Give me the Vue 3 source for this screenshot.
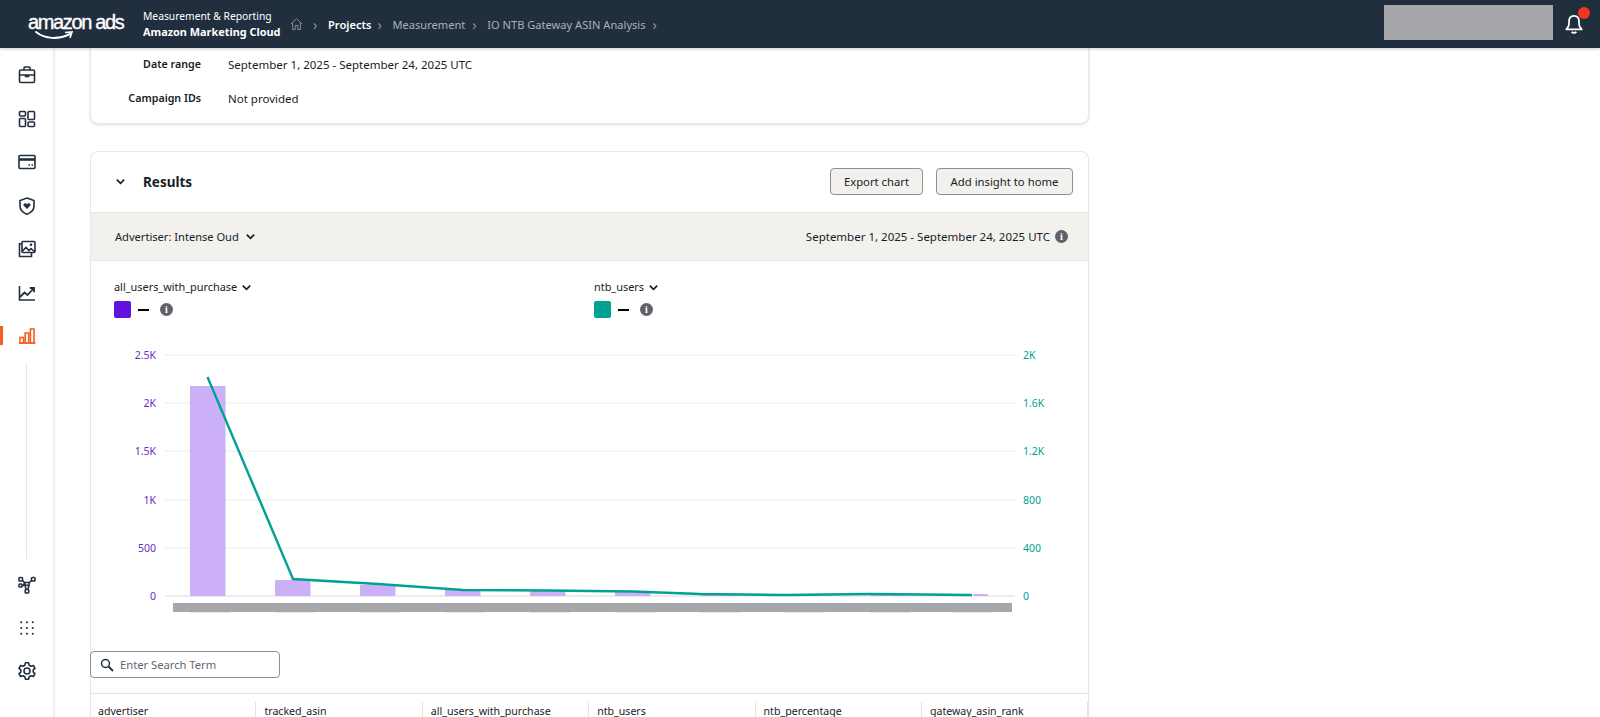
<script setup>
const crumbs = ['Measurement', 'IO NTB Gateway ASIN Analysis']
const columns = ['advertiser', 'tracked_asin', 'all_users_with_purchase', 'ntb_users', 'ntb_percentage', 'gateway_asin_rank']
const leftTicks = [['2.5K', 355], ['2K', 403], ['1.5K', 451], ['1K', 500], ['500', 548], ['0', 596]]
const rightTicks = [['2K', 355], ['1.6K', 403], ['1.2K', 451], ['800', 500], ['400', 548], ['0', 596]]
const bars = [
  [190, 386], [275, 580], [360, 585], [445, 589], [530, 590],
  [615, 591], [700, 594], [785, 595], [870, 595], [973, 594]
]
const line = '207.5,377 293,579 378,584 463,590 548,590.5 633,591.5 700,594 785,595 870,594 972,595'
const stubs = [178, 263, 348, 433, 518, 603, 688, 773, 858, 941]
</script>

<template>
  <div class="page">
    <header class="topbar">
      <div class="logo">
        <span class="logo-text">amazon ads</span>
        <svg class="smile" width="44" height="12" viewBox="0 0 44 12">
          <path d="M2 2 C11 9 24 10 36 4" fill="none" stroke="#fff" stroke-width="2" stroke-linecap="round" />
          <path d="M31 2.5 L38 2 L36 8" fill="none" stroke="#fff" stroke-width="1.6" />
        </svg>
      </div>
      <div class="product">
        <div>Measurement &amp; Reporting</div>
        <div class="product-name">Amazon Marketing Cloud</div>
      </div>
      <nav class="crumbs">
        <svg class="home" width="13" height="14" viewBox="0 0 14 14" fill="none" stroke="#8b95a1" stroke-width="1">
          <path d="M1 7 L7 1.2 L13 7 M2.8 5.6 V13 H5.6 V8.6 H8.4 V13 H11.2 V5.6" />
        </svg>
        <span class="chev">›</span>
        <span class="crumb-active">Projects</span>
        <template v-for="c in crumbs" :key="c">
          <span class="chev">›</span>
          <span class="crumb">{{ c }}</span>
        </template>
        <span class="chev">›</span>
      </nav>
      <div class="spacer"></div>
      <div class="redacted-user"></div>
      <div class="bell">
        <svg width="20" height="22" viewBox="0 0 22 24" fill="none" stroke="#fff" stroke-width="1.9">
          <path d="M11 3 C7 3 5.5 6 5.5 9.5 V12 C5.5 15 4 16.5 2.5 18 H19.5 C18 16.5 16.5 15 16.5 12 V9.5 C16.5 6 15 3 11 3 Z" stroke-linejoin="round" />
          <path d="M8.5 20.5 C9.5 22.3 12.5 22.3 13.5 20.5" stroke-width="2" />
        </svg>
        <span class="dot"></span>
      </div>
    </header>

    <div class="body-row">
      <aside class="sidebar">
        <div class="side-top">
          <svg class="ico" viewBox="0 0 20 20"><rect x="2.5" y="5" width="15" height="12.5" rx="1.5" /><path d="M7 5 V3 C7 2.5 7.4 2 8 2 H12 C12.6 2 13 2.5 13 3 V5 M2.5 10 H17.5 M8.5 10 V11.5 H11.5 V10" /></svg>
          <svg class="ico" viewBox="0 0 20 20"><rect x="2.5" y="2.5" width="6" height="4.5" rx="1" /><rect x="2.5" y="9.5" width="6" height="8" rx="1" /><rect x="11" y="2.5" width="6.5" height="8" rx="1" /><rect x="11" y="13" width="6.5" height="4.5" rx="1" /></svg>
          <svg class="ico" viewBox="0 0 20 20"><rect x="2" y="3.5" width="16" height="13" rx="1" /><path d="M2 7.5 H18" stroke-width="2.6" /><path d="M11.5 13 H13 M14.5 13 H16" /></svg>
          <svg class="ico" viewBox="0 0 20 20"><path d="M10 2 L17 4.5 V10 C17 14 14 16.8 10 18.3 C6 16.8 3 14 3 10 V4.5 Z" /><path class="solid" d="M10 13 L6.8 9.8 C5.6 8.4 7.6 6.4 9.2 7.6 L10 8.3 L10.8 7.6 C12.4 6.4 14.4 8.4 13.2 9.8 Z" /></svg>
          <svg class="ico" viewBox="0 0 20 20"><rect x="5" y="2.5" width="13" height="11" rx="1" /><path d="M5 4.8 H2.5 V17.5 H14.5 V13.5" /><path d="M5 12.5 L9 8.5 L12 11.5 L14 9.5 L18 13" /><circle class="solid" cx="14" cy="5.8" r="1.3" /></svg>
          <svg class="ico" viewBox="0 0 20 20"><path d="M2.5 3 V17 H18" /><path d="M3 14 L7.5 9.5 L10.5 12 L16.5 5.5 M12.8 5 H17 V9.2" stroke-width="1.8" /></svg>
          <div class="active-item">
            <span class="active-bar"></span>
            <svg class="ico orange" viewBox="0 0 20 20"><path d="M2 17 H18.5" /><rect x="3" y="11.5" width="3.6" height="5.5" /><rect x="8.2" y="7" width="3.6" height="10" /><rect x="13.4" y="3" width="3.6" height="14" /></svg>
          </div>
        </div>
        <div class="side-line"></div>
        <div class="side-bottom">
          <svg class="ico" viewBox="0 0 20 20"><rect x="2" y="2.5" width="3.5" height="3.5" rx=".8" /><rect x="14.5" y="2.5" width="3.5" height="3.5" rx=".8" /><rect x="8.2" y="14.5" width="3.5" height="3.5" rx=".8" /><rect x="2" y="9" width="3" height="3" rx=".8" /><path d="M5.5 5.5 L7.5 7.5 H12.5 L14.5 5.5 M7.5 7.5 L6.5 10.5 H5 M12.5 7.5 L11 14.5 M7.5 7.5 L9 14.5 M6.5 10.5 L13 10" /></svg>
          <svg class="ico dots" viewBox="0 0 20 20"><circle v-for="n in 9" :key="n" :cx="4.2 + ((n - 1) % 3) * 5.8" :cy="4.2 + Math.floor((n - 1) / 3) * 5.8" r="1.05" /></svg>
          <svg class="ico" viewBox="0 0 20 20"><circle cx="10" cy="10" r="3" /><path d="M8.4 1.8 H11.6 L12.1 4.2 L14.1 5.3 L16.4 4.5 L18 7.3 L16.2 8.9 V11.1 L18 12.7 L16.4 15.5 L14.1 14.7 L12.1 15.8 L11.6 18.2 H8.4 L7.9 15.8 L5.9 14.7 L3.6 15.5 L2 12.7 L3.8 11.1 V8.9 L2 7.3 L3.6 4.5 L5.9 5.3 L7.9 4.2 Z" stroke-linejoin="round" /></svg>
        </div>
      </aside>

      <main class="main">
        <section class="card summary">
          <div class="summary-row"><span class="s-label">Date range</span><span>September 1, 2025 - September 24, 2025 UTC</span></div>
          <div class="summary-row"><span class="s-label">Campaign IDs</span><span>Not provided</span></div>
        </section>

        <section class="card results">
          <div class="results-head">
            <svg class="caret big" viewBox="0 0 12 12"><path d="M2 4 L6 8 L10 4" /></svg>
            <h2>Results</h2>
            <div class="spacer"></div>
            <button class="btn export">Export chart</button>
            <button class="btn insight">Add insight to home</button>
          </div>
          <div class="filter-bar">
            <span class="adv">Advertiser: Intense Oud</span>
            <svg class="caret big" viewBox="0 0 12 12"><path d="M2 4 L6 8 L10 4" /></svg>
            <div class="spacer"></div>
            <span>September 1, 2025 - September 24, 2025 UTC</span>
            <span class="info">i</span>
          </div>
          <div class="metrics">
            <div class="metric">
              <div class="metric-name">all_users_with_purchase <svg class="caret" viewBox="0 0 12 12"><path d="M2 4 L6 8 L10 4" /></svg></div>
              <div class="metric-val"><span class="swatch purple"></span><span class="dash"></span><span class="info">i</span></div>
            </div>
            <div class="metric">
              <div class="metric-name">ntb_users <svg class="caret" viewBox="0 0 12 12"><path d="M2 4 L6 8 L10 4" /></svg></div>
              <div class="metric-val"><span class="swatch teal"></span><span class="dash"></span><span class="info">i</span></div>
            </div>
          </div>
          <svg class="chart" width="999" height="310" viewBox="90 330 999 310">
            <line v-for="t in leftTicks" :key="t[1]" x1="165" x2="1015" :y1="t[1]" :y2="t[1]" :stroke="t[1] === 596 ? '#e6e6e3' : '#f2f2f0'" stroke-width="1.5" />
            <text v-for="t in leftTicks" :key="t[0]" x="156" :y="t[1] + 4" text-anchor="end" class="tick-left">{{ t[0] }}</text>
            <text v-for="t in rightTicks" :key="t[0]" x="1023" :y="t[1] + 4" class="tick-right">{{ t[0] }}</text>
            <rect v-for="(b, i) in bars" :key="b[0]" :x="b[0]" :y="b[1]" :width="i === 9 ? 15 : 35.5" :height="596 - b[1]" rx="1" fill="#cbb0f8" />
            <polyline :points="line" fill="none" stroke="#00a294" stroke-width="2.4" />
            <rect v-for="s in stubs" :key="s" :x="s + 12" y="612" width="40" height="1" fill="#e6e6e7" />
            <rect x="173" y="603" width="839" height="9" fill="#a6a7aa" />
          </svg>
          <div class="search">
            <svg width="14" height="14" viewBox="0 0 14 14" fill="none" stroke="#232f3e" stroke-width="1.5"><circle cx="5.5" cy="5.5" r="4" /><path d="M8.5 8.5 L13 13" stroke-width="1.8" /></svg>
            <span>Enter Search Term</span>
          </div>
          <div class="table-head">
            <div v-for="c in columns" :key="c" class="col">{{ c }}</div>
          </div>
        </section>
      </main>
    </div>
  </div>
</template>

<style scoped>
.page {
  width: 1600px;
  height: 717px;
  overflow: hidden;
  background: #fff;
  color: #161d26;
  font-family: "Noto Sans", "Open Sans", sans-serif;
  font-size: 11.5px;
}
.spacer { flex: 1; }

.topbar {
  height: 48px;
  display: flex;
  align-items: center;
  background: #212e3e;
  color: #fff;
  position: relative;
  z-index: 2;
  box-shadow: 0 1px 3px rgba(0, 0, 0, .2);
}
.logo {
  width: 98px;
  margin-left: 28px;
  position: relative;
  height: 48px;
}
.logo-text {
  position: absolute;
  left: 0;
  top: 9px;
  font-family: "Liberation Sans", sans-serif;
  font-size: 20px;
  letter-spacing: -1.35px;
  -webkit-text-stroke: .35px #fff;
  line-height: 26px;
  white-space: nowrap;
}
.smile { position: absolute; left: 6px; top: 30px; }
.product {
  margin-left: 17px;
  font-size: 10.3px;
  line-height: 16px;
  white-space: nowrap;
  width: 147px;
}
.product-name { font-weight: 700; font-size: 10.9px; }
.crumbs {
  display: flex;
  align-items: center;
  font-size: 11.1px;
  color: #a9b1bb;
}
.home { margin-right: 10px; }
.chev { font-size: 14px; width: 10px; color: #8b95a1; margin-right: 5px; }
.crumb-active { color: #fff; font-weight: 600; margin-right: 6px; }
.crumb { margin-right: 7px; }
.redacted-user {
  width: 169px;
  height: 35px;
  background: #a6a7aa;
  margin-top: -4px;
}
.bell {
  width: 47px;
  height: 48px;
  padding-right: 6px;
  box-sizing: border-box;
  display: flex;
  align-items: center;
  justify-content: center;
  position: relative;
}
.dot {
  position: absolute;
  left: 25px;
  top: 7px;
  width: 12px;
  height: 12px;
  border-radius: 50%;
  background: #f0371f;
}

.body-row { display: flex; height: 669px; }

.sidebar {
  width: 53px;
  flex: none;
  border-right: 1px solid #ececec;
  box-shadow: 2px 0 3px rgba(0, 0, 0, .04);
  display: flex;
  flex-direction: column;
  align-items: center;
  padding-top: 17px;
}
.side-top { display: flex; flex-direction: column; gap: 23.5px; align-items: center; }
.ico {
  width: 20px;
  height: 20px;
  display: block;
  fill: none;
  stroke: #232f3e;
  stroke-width: 1.6;
}
.ico .solid { fill: #232f3e; stroke: none; }
.ico.orange { stroke: #f2621f; }
.ico.dots { stroke: none; fill: #232f3e; }
.active-item { position: relative; }
.active-bar {
  position: absolute;
  left: -17px;
  top: 0;
  width: 3px;
  height: 19px;
  background: #f2621f;
}
.side-line {
  width: 1px;
  height: 196px;
  margin-top: 17px;
  background: #e6e6e6;
}
.side-bottom {
  margin-top: 16px;
  display: flex;
  flex-direction: column;
  gap: 23px;
  align-items: center;
}

.main {
  flex: 1;
  min-width: 0;
  padding-left: 36px;
  overflow: hidden;
}
.card {
  width: 999px;
  box-sizing: border-box;
  background: #fff;
  border: 1px solid #e8e8e6;
}
.summary {
  height: 76px;
  border-top: 0;
  border-radius: 0 0 8px 8px;
  box-shadow: 0 1px 3px rgba(0, 0, 0, .12);
}
.summary-row {
  display: flex;
  gap: 27px;
  height: 32px;
  align-items: center;
  margin-bottom: 2px;
}
.s-label { width: 110px; text-align: right; font-weight: 600; font-size: 10.7px; }
.results {
  margin-top: 27px;
  border-radius: 8px 8px 0 0;
  border-bottom: 0;
}
.results-head {
  height: 60px;
  display: flex;
  align-items: center;
  padding-left: 24px;
  padding-right: 15px;
  padding-bottom: 1px;
  box-sizing: border-box;
}
.results-head h2 {
  margin: 0 0 0 17px;
  font-size: 13.5px;
  font-weight: 700;
}
.btn {
  height: 27px;
  border: 1px solid #8d8f92;
  border-radius: 4px;
  background: #f3f1ee;
  color: #161d26;
  font-family: inherit;
  font-size: 11.3px;
  padding: 0;
}
.export { width: 93px; margin-right: 13px; }
.insight { width: 137px; }
.caret {
  width: 11px;
  height: 11px;
  fill: none;
  stroke: #161d26;
  stroke-width: 1.8;
  vertical-align: -2px;
  margin-left: 1px;
}
.caret.big { margin-left: 0; flex: none; }
.filter-bar {
  height: 49px;
  box-sizing: border-box;
  background: #f3f1ee;
  border-top: 1px solid #e6e6e3;
  border-bottom: 1px solid #e6e6e3;
  display: flex;
  align-items: center;
  padding: 0 20px 1px 24px;
}
.adv { font-size: 11.1px; }
.filter-bar .caret { margin-left: 6px; }
.filter-bar .info { margin-left: 5px; }
.info {
  width: 13px;
  height: 13px;
  border-radius: 50%;
  background: #5f6368;
  color: #fff;
  font: 700 10px/13px "Liberation Serif", serif;
  text-align: center;
  flex: none;
}
.metrics {
  display: grid;
  grid-template-columns: 480px 1fr;
  padding: 18px 0 0 23px;
  height: 51px;
}
.metric-name { line-height: 16px; font-size: 10.9px; }
.metric-val {
  display: flex;
  align-items: center;
  margin-top: 6px;
  height: 17px;
}
.swatch { width: 17px; height: 17px; border-radius: 2px; }
.purple { background: #6113dd; }
.teal { background: #00a294; }
.dash { width: 11px; height: 2px; background: #000; margin: 0 11px 0 7px; }
.chart { display: block; margin-left: -1px; }
.tick-left { fill: #6a2cc2; font-size: 10.5px; }
.tick-right { fill: #00a294; font-size: 10.5px; }
.search {
  width: 190px;
  height: 27px;
  box-sizing: border-box;
  margin: 11px 0 15px -1px;
  border: 1px solid #8d8f92;
  border-radius: 4px;
  display: flex;
  align-items: center;
  gap: 6px;
  padding-left: 9px;
  color: #5f6670;
  font-size: 11.2px;
}
.table-head {
  display: grid;
  grid-template-columns: repeat(6, 166.4px);
  border-top: 1px solid #e3e3e1;
  padding-top: 8px;
  margin-left: -1px;
  font-size: 10.6px;
}
.col {
  height: 18px;
  padding-left: 8px;
  border-right: 1px solid #e3e3e1;
  line-height: 18px;
  box-sizing: border-box;
}
</style>

<style>
html, body { margin: 0; overflow: hidden; background: #fff; }
</style>
